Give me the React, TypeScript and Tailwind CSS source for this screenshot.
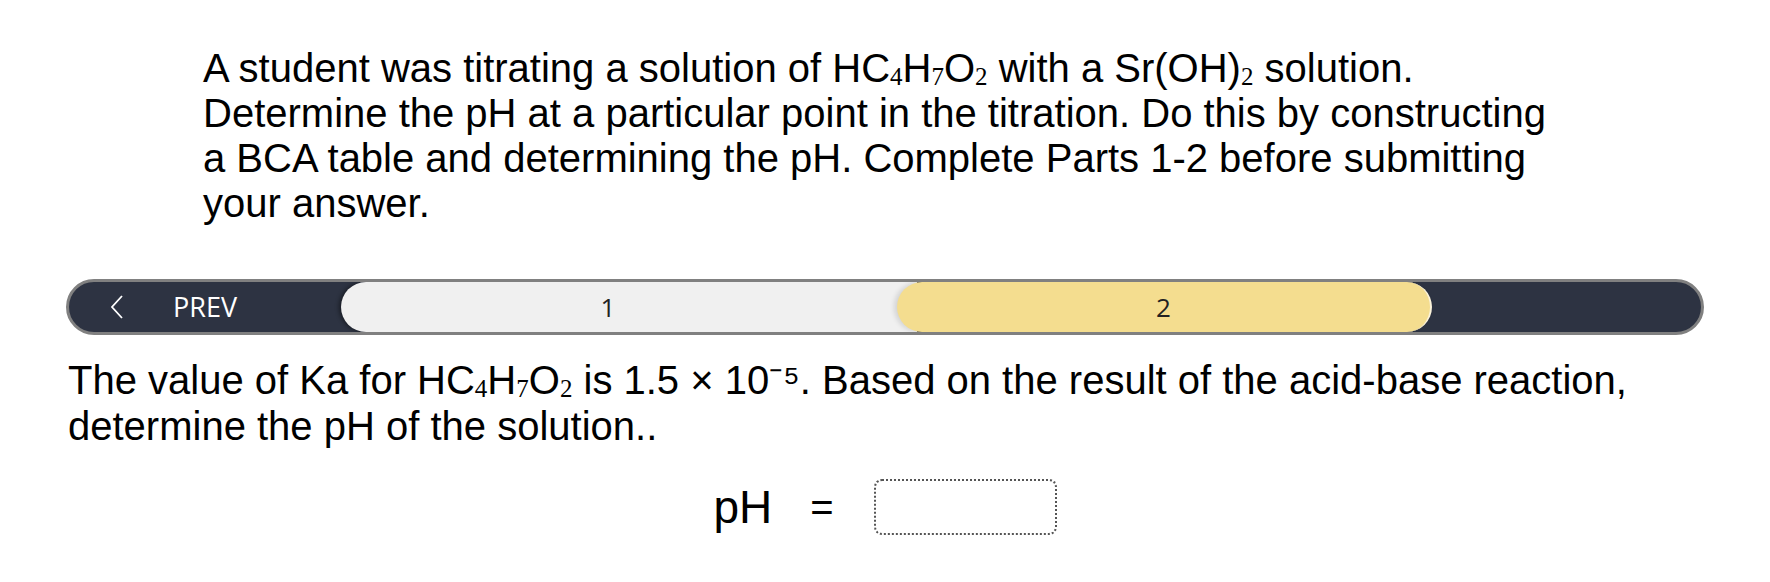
import React from 'react';

const Sub = ({ children }: { children: React.ReactNode }) => (
    <span className="relative top-[3px] text-[25px] leading-none font-['Liberation_Serif',serif]">{children}</span>
);

export default function App() {
    return (
        <div className="w-[1770px] h-[582px] bg-white text-black font-['Liberation_Sans',Arial,sans-serif]">
            {/* Intro */}
            <p className="ml-[203px] pt-[46px] w-[1360px] text-[40px] leading-[45px]">
                A student was titrating a solution of HC<Sub>4</Sub>H<Sub>7</Sub>O<Sub>2</Sub> with a Sr(OH)<Sub>2</Sub> solution.
                Determine the pH at a particular point in the titration. Do this by constructing a BCA table and
                determining the pH. Complete Parts 1-2 before submitting your answer.
            </p>

            {/* Part navigation */}
            <div className="mt-[53px] mx-[66px] h-[56px] rounded-full border-[3px] border-[#808080] bg-[#2d3342] flex items-stretch overflow-hidden">
                <button className="w-[272px] shrink-0 flex items-center text-white font-['Open_Sans',sans-serif] text-[27px]">
                    <svg className="ml-[40px] w-[16px] h-[24px]" viewBox="0 0 16 24" fill="none">
                        <polyline points="13,1 3,12 13,23" stroke="white" strokeWidth="1.8" />
                    </svg>
                    <span className="ml-[48px]">PREV</span>
                </button>
                <div className="w-[576px] shrink-0 pr-[42px] rounded-l-full bg-[#f0f0f0] shadow-[-2px_0_4px_rgba(0,0,0,0.45)] flex items-center justify-center font-['Open_Sans',sans-serif] text-[26px] text-[#222]">
                    1
                </div>
                <div className="relative z-10 -ml-[20px] w-[535px] shrink-0 rounded-full bg-[#f4dd8f] border-r-2 border-[#fbf3da] shadow-[-3px_0_5px_rgba(0,0,0,0.12)] flex items-center justify-center font-['Open_Sans',sans-serif] text-[26px] text-[#222]">
                    2
                </div>
            </div>

            {/* Part 2 */}
            <p className="mt-[22px] ml-[68px] w-[1640px] text-[40px] leading-[46px]">
                The value of Ka for HC<Sub>4</Sub>H<Sub>7</Sub>O<Sub>2</Sub> is 1.5 × 10⁻⁵. Based on the result of the acid-base reaction,
                determine the pH of the solution..
            </p>

            <div className="mt-[30px] flex items-center justify-center">
                <span className="text-[46px] leading-none">pH</span>
                <span className="ml-[38px] text-[40px] leading-none">=</span>
                <div className="ml-[40px] w-[183px] h-[56px] rounded-[8px] border-2 border-dotted border-[#555]" />
            </div>
        </div>
    );
}
